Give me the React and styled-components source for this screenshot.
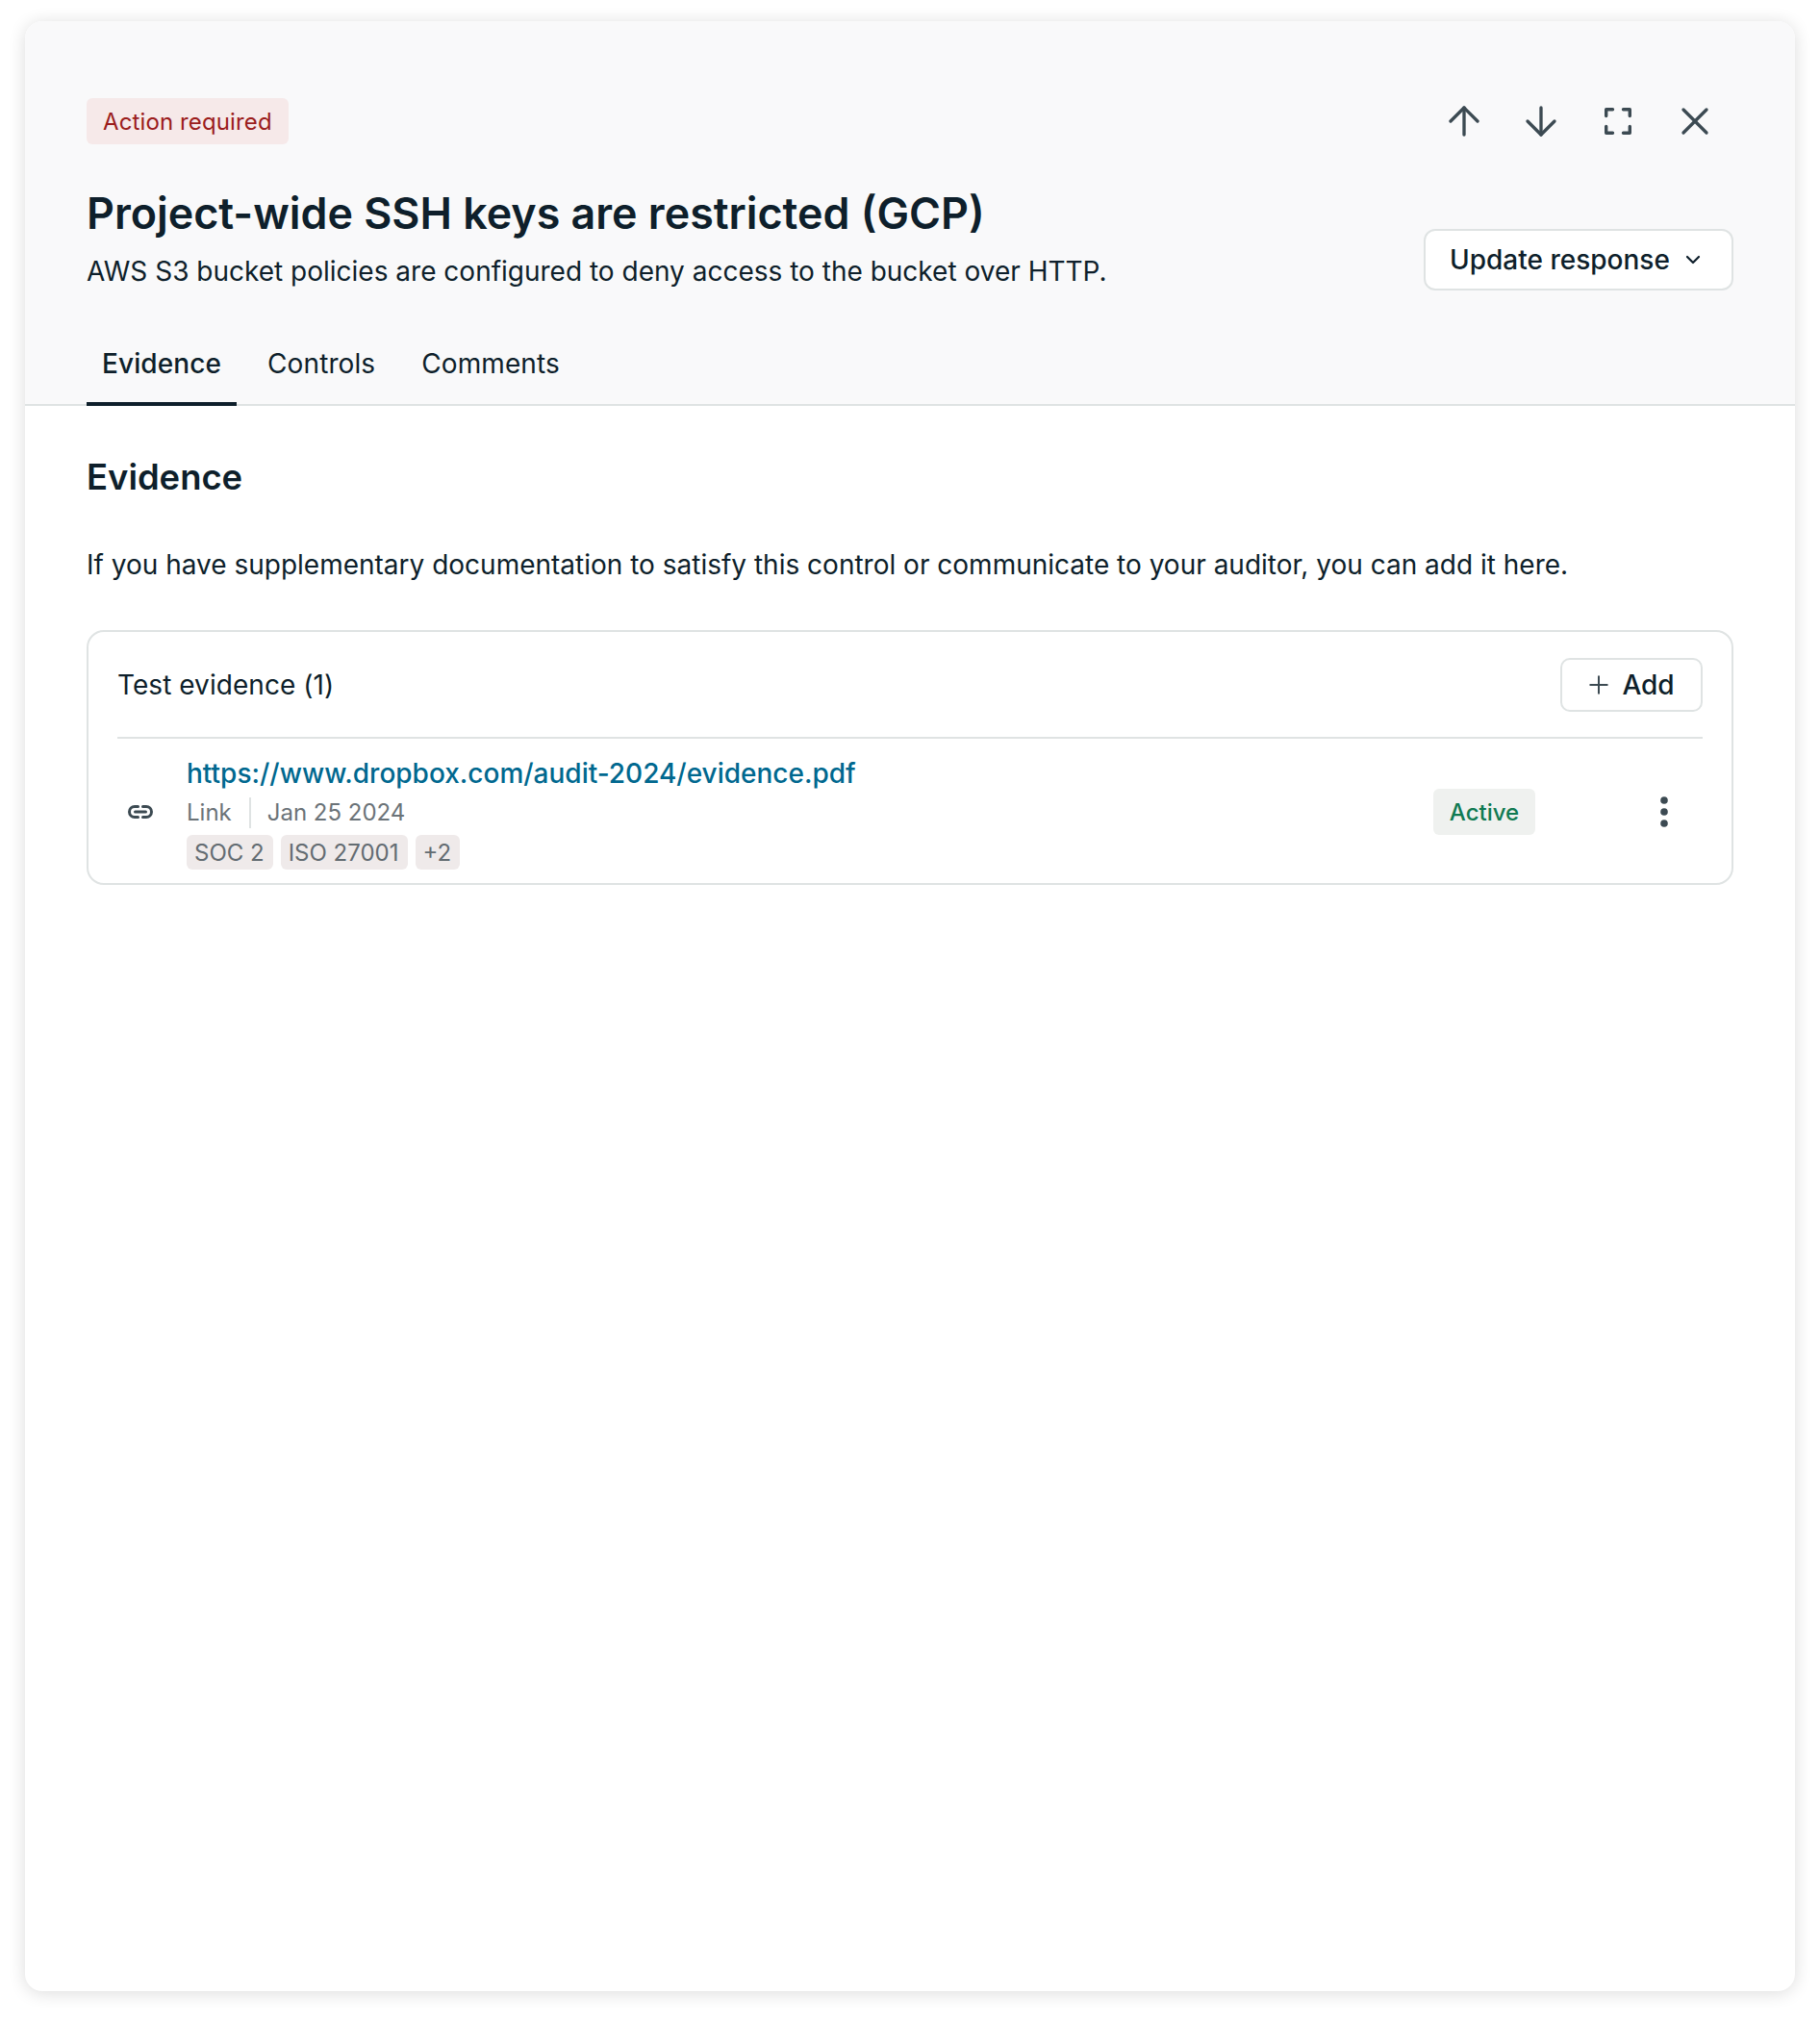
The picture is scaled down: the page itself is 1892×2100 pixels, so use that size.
import React from 'react'
import styled, { createGlobalStyle } from 'styled-components'
import { ArrowUp, ArrowDown, X, ChevronDown, Plus } from 'lucide-react'

const GlobalStyle = createGlobalStyle`
  html, body {
    margin: 0;
    padding: 0;
    background: #fff;
    font-family: Inter, "Liberation Sans", sans-serif;
    color: #0e1f2b;
  }
  * { box-sizing: border-box; }
`

const tags = [`SOC 2`, `ISO 27001`, `+2`]

export default function App() {
  return (
    <Page>
      <GlobalStyle />
      <Panel>
        <Header>
          <TopRow>
            <Badge>Action required</Badge>
            <Actions>
              <IconButton><ArrowUp size={48} strokeWidth={1.67} /></IconButton>
              <IconButton><ArrowDown size={48} strokeWidth={1.67} /></IconButton>
              <IconButton>
                <svg width="48" height="48" viewBox="0 0 48 48" fill="none" stroke="currentColor" strokeWidth="3.4" strokeLinecap="round" strokeLinejoin="round">
                  <path d="M11.7 18.5v-6.8h6.8M29.5 11.7h6.8v6.8M36.3 29.5v6.8h-6.8M18.5 36.3h-6.8v-6.8" />
                </svg>
              </IconButton>
              <IconButton><X size={48} strokeWidth={1.67} /></IconButton>
            </Actions>
          </TopRow>
          <TitleRow>
            <div>
              <Title>Project-wide SSH keys are restricted (GCP)</Title>
              <Subtitle>AWS S3 bucket policies are configured to deny access to the bucket over HTTP.</Subtitle>
            </div>
            <ResponseButton>
              Update response
              <ChevronDown size={24} strokeWidth={2.2} />
            </ResponseButton>
          </TitleRow>
          <Tabs>
            <Tab $active>Evidence</Tab>
            <Tab>Controls</Tab>
            <Tab>Comments</Tab>
          </Tabs>
        </Header>
        <Content>
          <SectionTitle>Evidence</SectionTitle>
          <Intro>If you have supplementary documentation to satisfy this control or communicate to your auditor, you can add it here.</Intro>
          <EvidenceCard>
            <CardHead>
              <CardTitle>Test evidence (1)</CardTitle>
              <AddButton>
                <Plus size={30} strokeWidth={1.6} color="#3c4a52" />
                Add
              </AddButton>
            </CardHead>
            <EvidenceRow>
              <LinkIcon>
                <svg width="32" height="32" viewBox="0 0 32 32" fill="none" stroke="currentColor" strokeWidth="3" strokeLinecap="round">
                  <path d="M13.5 10.5H10a5.5 5.5 0 0 0 0 11h3.5M18.5 10.5H22a5.5 5.5 0 0 1 0 11h-3.5M10.5 16h11" />
                </svg>
              </LinkIcon>
              <EvidenceInfo>
                <EvidenceLink>https://www.dropbox.com/audit-2024/evidence.pdf</EvidenceLink>
                <Meta>
                  <MetaItem>Link</MetaItem>
                  <MetaItem $divided>Jan 25 2024</MetaItem>
                </Meta>
                <TagList>
                  {tags.map(tag => (
                    <Tag key={tag}>{tag}</Tag>
                  ))}
                </TagList>
              </EvidenceInfo>
              <Status>Active</Status>
              <MoreButton>
                <svg width="8" height="32" viewBox="0 0 8 32" fill="currentColor">
                  <circle cx="4" cy="4" r="3.8" />
                  <circle cx="4" cy="16" r="3.8" />
                  <circle cx="4" cy="28" r="3.8" />
                </svg>
              </MoreButton>
            </EvidenceRow>
          </EvidenceCard>
        </Content>
      </Panel>
    </Page>
  )
}

const Page = styled.div`
  height: 2100px;
  padding: 22px 26px 30px;
`

const Panel = styled.div`
  height: 2048px;
  border-radius: 18px;
  background: #fff;
  overflow: hidden;
  box-shadow: 0 2px 18px rgba(0, 0, 0, 0.14);
`

const Header = styled.div`
  display: flex;
  flex-direction: column;
  height: 400px;
  padding: 80px 64px 0;
  background: #f9f9fa;
  border-bottom: 2px solid #dfe3e3;
`

const TopRow = styled.div`
  display: flex;
  justify-content: space-between;
  align-items: center;
  height: 48px;
`

const Badge = styled.span`
  padding: 0 17px;
  height: 48px;
  display: inline-flex;
  align-items: center;
  border-radius: 6px;
  background: #f6e9e9;
  color: #9b1c1c;
  font-size: 24px;
  letter-spacing: 0.12px;
`

const Actions = styled.div`
  display: flex;
`

const IconButton = styled.button`
  width: 80px;
  height: 48px;
  display: flex;
  align-items: center;
  justify-content: center;
  padding: 0;
  border: none;
  background: transparent;
  color: #3c4a52;
`

const TitleRow = styled.div`
  display: flex;
  justify-content: space-between;
  align-items: flex-end;
  margin-top: 42px;
`

const Title = styled.h1`
  margin: 0;
  font-size: 44.8px;
  line-height: 60px;
  font-weight: 600;
`

const Subtitle = styled.p`
  margin: 10px 0 0;
  font-size: 28px;
  line-height: 40px;
`

const ResponseButton = styled.button`
  display: flex;
  align-items: center;
  gap: 12px;
  height: 64px;
  width: 322px;
  padding: 0 0 0 25px;
  border: 2px solid #dfe3e3;
  border-radius: 12px;
  background: #fff;
  color: #0e1f2b;
  font-family: inherit;
  font-size: 28px;
  font-weight: 500;
  white-space: nowrap;
`

const Tabs = styled.div`
  display: flex;
  gap: 16px;
  margin-top: auto;
  margin-bottom: -2px;
`

const Tab = styled.div`
  height: 84px;
  padding: 0 16px;
  display: flex;
  align-items: center;
  font-size: 28px;
  letter-spacing: 0.1px;
  font-weight: ${({ $active }) => ($active ? 500 : 400)};
  border-bottom: 4px solid ${({ $active }) => ($active ? `#0e1f2b` : `transparent`)};
`

const Content = styled.div`
  padding: 50px 64px 0;
`

const SectionTitle = styled.h2`
  margin: 0;
  font-size: 36.4px;
  line-height: 48px;
  font-weight: 600;
`

const Intro = styled.p`
  margin: 47px 0 0;
  font-size: 28px;
  line-height: 40px;
`

const EvidenceCard = styled.div`
  margin-top: 48px;
  height: 265px;
  padding: 0 30px;
  border: 2px solid #dfe3e3;
  border-radius: 18px;
`

const CardHead = styled.div`
  display: flex;
  justify-content: space-between;
  align-items: center;
  height: 111px;
  border-bottom: 2px solid #dfe3e3;
`

const CardTitle = styled.span`
  font-size: 28px;
  letter-spacing: 0.05px;
`

const AddButton = styled.button`
  display: flex;
  align-items: center;
  justify-content: center;
  gap: 9px;
  width: 148px;
  height: 56px;
  padding: 0 4px 0 0;
  border: 2px solid #dfe3e3;
  border-radius: 10px;
  background: #fff;
  color: #0e1f2b;
  font-family: inherit;
  font-size: 28px;
  font-weight: 500;
`

const EvidenceRow = styled.div`
  display: flex;
  align-items: center;
  height: 150px;
  padding-top: 2px;
`

const LinkIcon = styled.div`
  width: 48px;
  margin-right: 24px;
  display: flex;
  justify-content: center;
  color: #3c4a52;
`

const EvidenceInfo = styled.div`
  flex: 1;
`

const EvidenceLink = styled.a`
  display: block;
  font-size: 28px;
  font-weight: 500;
  line-height: 40px;
  color: #00688f;
`

const Meta = styled.div`
  display: flex;
  align-items: center;
  height: 32px;
  margin-top: 5px;
  color: #6b7378;
  font-size: 24px;
`

const MetaItem = styled.span`
  line-height: 32px;
  ${({ $divided }) =>
    $divided &&
    `
    margin-left: 18px;
    padding-left: 17px;
    border-left: 2px solid #dfe3e3;
  `}
`

const TagList = styled.div`
  display: flex;
  gap: 8px;
  margin-top: 7px;
`

const Tag = styled.span`
  height: 36px;
  padding: 0 9px 0 8px;
  display: inline-flex;
  align-items: center;
  border-radius: 6px;
  background: #efeaea;
  color: #636c72;
  font-size: 24px;
`

const Status = styled.span`
  height: 48px;
  width: 106px;
  display: inline-flex;
  align-items: center;
  justify-content: center;
  border-radius: 6px;
  background: #eff1ef;
  color: #107a52;
  font-size: 24px;
  font-weight: 500;
`

const MoreButton = styled.div`
  width: 80px;
  margin-left: 94px;
  display: flex;
  justify-content: center;
  color: #3c4a52;
`
